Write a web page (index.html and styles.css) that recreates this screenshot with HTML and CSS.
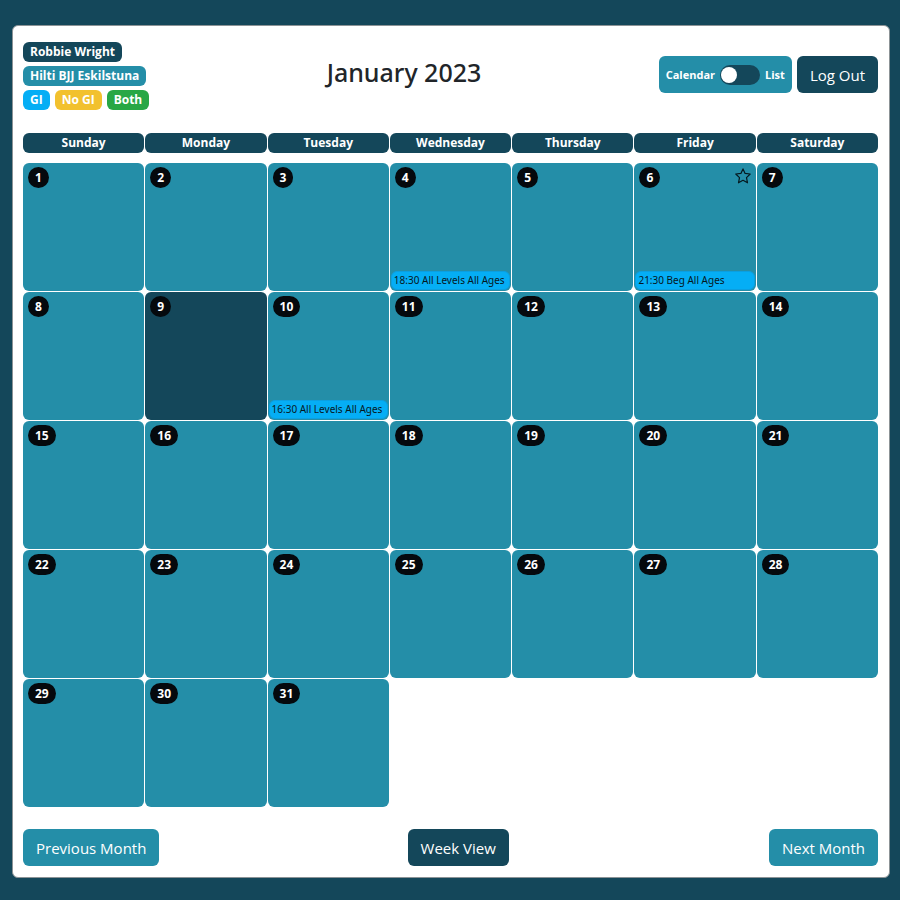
FILE: index.html
```html
<!DOCTYPE html>
<html lang="en">
<head>
<meta charset="utf-8">
<title>January 2023</title>
<link rel="stylesheet" href="styles.css">
</head>
<body>
<main class="card">
  <header class="top">
    <div class="badges">
      <span class="badge dark">Robbie Wright</span>
      <span class="badge teal">Hilti BJJ Eskilstuna</span>
      <div class="legend">
        <span class="badge gi">GI</span>
        <span class="badge nogi">No GI</span>
        <span class="badge both">Both</span>
      </div>
    </div>
    <h1 class="title">January 2023</h1>
    <div class="actions">
      <label class="switch">Calendar <input type="checkbox" class="toggle"> List</label>
      <button type="button" class="btn dark">Log Out</button>
    </div>
  </header>

  <table class="calendar">
    <thead>
      <tr><th>Sunday</th><th>Monday</th><th>Tuesday</th><th>Wednesday</th><th>Thursday</th><th>Friday</th><th>Saturday</th></tr>
    </thead>
    <tbody>
      <tr>
        <td><span class="day">1</span></td>
        <td><span class="day">2</span></td>
        <td><span class="day">3</span></td>
        <td><span class="day">4</span><a class="event" href="#">18:30 All Levels All Ages</a></td>
        <td><span class="day">5</span></td>
        <td><span class="day">6</span><svg class="star" viewBox="0 0 16 16" aria-hidden="true"><path d="M8 .9 10.1 5.4 15.2 6 11.5 9.6 12.5 14.8 8 12.3 3.5 14.8 4.5 9.6.8 6 5.9 5.4Z"/></svg><a class="event" href="#">21:30 Beg All Ages</a></td>
        <td><span class="day">7</span></td>
      </tr>
      <tr>
        <td><span class="day">8</span></td>
        <td class="today"><span class="day">9</span></td>
        <td><span class="day">10</span><a class="event" href="#">16:30 All Levels All Ages</a></td>
        <td><span class="day">11</span></td>
        <td><span class="day">12</span></td>
        <td><span class="day">13</span></td>
        <td><span class="day">14</span></td>
      </tr>
      <tr>
        <td><span class="day">15</span></td>
        <td><span class="day">16</span></td>
        <td><span class="day">17</span></td>
        <td><span class="day">18</span></td>
        <td><span class="day">19</span></td>
        <td><span class="day">20</span></td>
        <td><span class="day">21</span></td>
      </tr>
      <tr>
        <td><span class="day">22</span></td>
        <td><span class="day">23</span></td>
        <td><span class="day">24</span></td>
        <td><span class="day">25</span></td>
        <td><span class="day">26</span></td>
        <td><span class="day">27</span></td>
        <td><span class="day">28</span></td>
      </tr>
      <tr>
        <td><span class="day">29</span></td>
        <td><span class="day">30</span></td>
        <td><span class="day">31</span></td>
      </tr>
    </tbody>
  </table>

  <nav class="pager">
    <button type="button" class="btn teal">Previous Month</button>
    <button type="button" class="btn dark">Week View</button>
    <button type="button" class="btn teal">Next Month</button>
  </nav>
</main>
</body>
</html>
```

FILE: styles.css
```css
* { box-sizing: border-box; }

body {
  margin: 0;
  padding: 25px 10px 22px 12px;
  background: #14475a;
  color: #212529;
  font-family: "Open Sans", "Noto Sans", sans-serif;
  font-size: 15px;
}

.card {
  padding: 16px 11px 11px 10px;
  background: #fff;
  border: 1px solid #8c9396;
  border-radius: 6px;
}

.dark { background: #14475a; }
.teal { background: #248ea8; }
.gi { background: #05aef5; }
.nogi { background: #f2c12e; }
.both { background: #28a745; }

.top {
  display: flex;
  justify-content: space-between;
  align-items: flex-start;
  height: 91px;
}

.badges {
  display: flex;
  flex-direction: column;
  align-items: flex-start;
  gap: 4px;
}

.legend {
  display: flex;
  gap: 5px;
}

.badge {
  padding: 0 7px;
  border-radius: 6px;
  color: #fff;
  font-size: 12px;
  font-weight: 700;
  line-height: 20px;
}

.title {
  margin: 14px 0 0;
  font-family: "Noto Sans", "Open Sans", sans-serif;
  font-size: 25px;
  font-weight: 500;
  line-height: 32px;
}

.actions {
  display: flex;
  gap: 5px;
  margin-top: 14px;
}

.btn {
  height: 37px;
  padding: 0 13px;
  border: 0;
  border-radius: 6px;
  color: #fff;
  font: inherit;
  white-space: nowrap;
}

.switch {
  display: flex;
  align-items: center;
  gap: 5px;
  height: 37px;
  padding: 0 7px;
  border-radius: 6px;
  background: #248ea8;
  color: #fff;
  font-size: 11px;
  font-weight: 700;
}

.toggle {
  display: flex;
  align-items: center;
  width: 40px;
  height: 20px;
  margin: 0;
  padding: 0 1px;
  border-radius: 10px;
  background: #14475a;
  appearance: none;
}

.toggle::before {
  width: 16px;
  height: 16px;
  border-radius: 50%;
  background: #fff;
  content: "";
}

.toggle:checked { justify-content: flex-end; }

.calendar,
.calendar thead,
.calendar tbody { display: block; }

.calendar thead { margin-bottom: 10px; }

.calendar tr {
  display: grid;
  grid-template-columns: repeat(7, minmax(0, 1fr));
  column-gap: 1px;
}

.calendar tbody tr + tr { margin-top: 1px; }

.calendar th {
  padding: 0;
  border-radius: 6px;
  background: #14475a;
  color: #fff;
  font-size: 12px;
  font-weight: 700;
  line-height: 20px;
}

.calendar td {
  display: flex;
  flex-wrap: wrap;
  justify-content: space-between;
  align-content: space-between;
  min-height: 128px;
  padding: 4px 1px 1px;
  border-radius: 6px;
  background: #248ea8;
}

.calendar td.today { background: #14475a; }

.day {
  margin-left: 4px;
  padding: 0 7px;
  border-radius: 11px;
  background: #05090d;
  color: #fff;
  font-size: 12px;
  font-weight: 700;
  line-height: 21px;
}

.star {
  width: 16px;
  height: 16px;
  margin: 1px 4px 0 0;
  fill: none;
  stroke: #05181e;
  stroke-width: 1.2;
  stroke-linejoin: round;
}

.event {
  width: 100%;
  padding: 0 2px;
  overflow: hidden;
  border: 1px solid #0b9fe0;
  border-radius: 6px;
  background: #05aef5;
  color: #05181e;
  font-family: "Noto Sans", "Open Sans", sans-serif;
  font-size: 10px;
  line-height: 17px;
  text-decoration: none;
  white-space: nowrap;
}

.pager {
  display: flex;
  justify-content: space-between;
  margin-top: 22px;
}

.pager .dark { margin-right: 12px; }
```
